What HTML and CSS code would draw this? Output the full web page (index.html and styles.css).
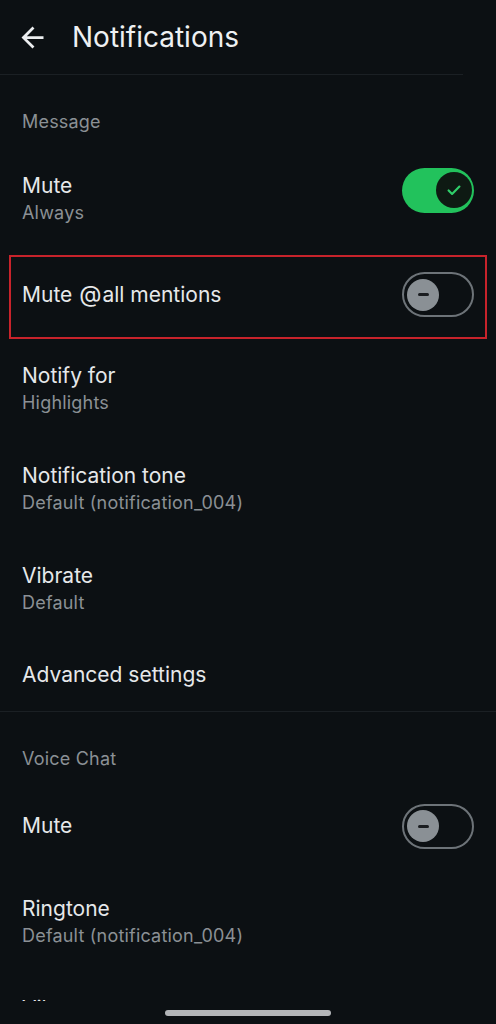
FILE: index.html
```html
<!DOCTYPE html>
<html lang="en">
<head>
<meta charset="utf-8">
<title>Notifications</title>
<link rel="stylesheet" href="styles.css">
</head>
<body>
<div class="screen">
  <header class="appbar">
    <svg class="back" viewBox="0 0 24 24" width="33" height="33"><path fill="#eceef0" d="M20 11H7.83l5.59-5.59L12 4l-8 8 8 8 1.41-1.41L7.83 13H20v-2z"/></svg>
    <h1 class="title">Notifications</h1>
  </header>
  <div class="divider short"></div>

  <div class="section-label">Message</div>

  <div class="row two">
    <div class="text">
      <div class="t">Mute</div>
      <div class="s">Always</div>
    </div>
    <div class="switch on lift"><span class="thumb"><svg viewBox="0 0 24 24" width="20" height="20"><path d="M5.5 12.5l4.2 4.2 8.8-8.8" fill="none" stroke="#2fcf6a" stroke-width="2.6" stroke-linecap="round" stroke-linejoin="round"/></svg></span></div>
  </div>

  <div class="row hl-wrap">
    <div class="hl">
      <div class="text"><div class="t">Mute <span class="at">@</span>all mentions</div></div>
      <div class="switch off"><span class="thumb"><span class="minus"></span></span></div>
    </div>
  </div>

  <div class="row two">
    <div class="text"><div class="t">Notify for</div><div class="s">Highlights</div></div>
  </div>
  <div class="row two">
    <div class="text"><div class="t">Notification tone</div><div class="s">Default (notification_004)</div></div>
  </div>
  <div class="row two">
    <div class="text"><div class="t">Vibrate</div><div class="s">Default</div></div>
  </div>
  <div class="row one">
    <div class="text"><div class="t">Advanced settings</div></div>
  </div>

  <div class="divider"></div>

  <div class="section-label">Voice Chat</div>

  <div class="row vmute">
    <div class="text"><div class="t">Mute</div></div>
    <div class="switch off"><span class="thumb"><span class="minus"></span></span></div>
  </div>
  <div class="row two">
    <div class="text"><div class="t">Ringtone</div><div class="s">Default (notification_004)</div></div>
  </div>
  <div class="row two">
    <div class="text"><div class="t">Vibrate</div><div class="s">Default</div></div>
  </div>

  <div class="navbar"><div class="nav-handle"></div></div>
</div>
</body>
</html>
```

FILE: styles.css
```css
* { box-sizing: border-box; }
html, body { margin: 0; padding: 0; background: #0c1013; }
body {
  font-family: Inter, "Noto Sans", Roboto, sans-serif;
  color: #e6e8ea;
  width: 496px;
  height: 1024px;
  overflow: hidden;
}
.screen { position: relative; width: 496px; height: 1024px; overflow: hidden; }

.appbar {
  height: 74px;
  display: flex;
  align-items: center;
  padding-left: 16px;
}
.back { display: block; flex: none; }
.title {
  margin: 0 0 0 23px;
  font-size: 28px;
  font-weight: 400;
  color: #eef0f2;
}
.divider { height: 1px; background: #1b2024; }
.divider.short { margin-right: 33px; }

.section-label {
  height: 74px;
  padding: 35px 22px 0;
  font-size: 18px;
  line-height: 24px;
  letter-spacing: 0.2px;
  color: #8b9095;
}

.row {
  display: flex;
  align-items: center;
  justify-content: space-between;
  padding: 0 22px;
}
.row.two { height: 100px; }
.row.one { height: 72px; }
.row.vmute { height: 86px; padding-bottom: 6px; }

.t { font-size: 21px; line-height: 28px; color: #e6e8ea; }
.t .at { font-size: 23px; margin: 0 1px; }
.s { font-size: 18px; line-height: 26px; letter-spacing: 0.2px; color: #8b9095; }

.hl-wrap { height: 90px; padding: 6px 9px 0; display: block; }
.hl {
  height: 84px;
  border: 2px solid #c8232b;
  display: flex;
  align-items: center;
  justify-content: space-between;
  padding: 0 11px 5px 11px;
}

.switch {
  width: 72px;
  height: 45px;
  border-radius: 23px;
  flex: none;
  display: flex;
  align-items: center;
}
.switch.lift { margin-bottom: 18px; }
.switch.on {
  background: #22c25c;
  justify-content: flex-end;
  padding-right: 2px;
}
.switch.on .thumb {
  width: 36px;
  height: 36px;
  border-radius: 50%;
  background: #0e1a13;
  display: flex;
  align-items: center;
  justify-content: center;
}
.switch.off {
  border: 2.5px solid #6d7378;
  padding-left: 3px;
}
.switch.off .thumb {
  width: 32px;
  height: 32px;
  border-radius: 50%;
  background: #8a9095;
  display: flex;
  align-items: center;
  justify-content: center;
}
.minus { width: 11px; height: 3px; border-radius: 2px; background: #1a1d20; }

.navbar {
  position: absolute;
  left: 0;
  right: 0;
  top: 1001px;
  bottom: 0;
  background: #0c1013;
  display: flex;
  justify-content: center;
  padding-top: 9px;
}
.nav-handle {
  width: 166px;
  height: 6px;
  border-radius: 3px;
  background: #b3b5b8;
}
```
